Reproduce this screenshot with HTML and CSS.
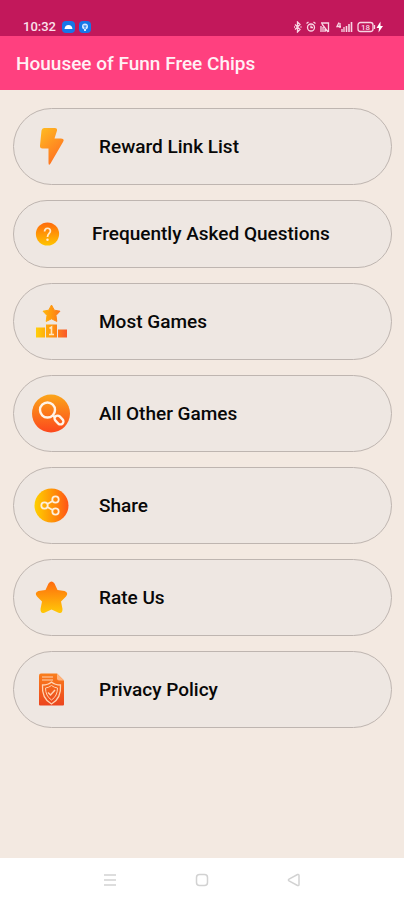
FILE: index.html
```html
<!DOCTYPE html>
<html lang="en">
<head>
<meta charset="UTF-8">
<meta name="viewport" content="width=device-width, initial-scale=1.0">
<title>Houusee of Funn Free Chips</title>
<link rel="stylesheet" href="styles.css">
</head>
<body>

<div class="status-bar">
    <span class="clock">10:32</span>
    <svg class="badges" width="30" height="12" viewBox="0 0 30 12" aria-hidden="true">
        <rect x="0" y="0" width="13" height="12" rx="4" fill="#1677e8"/>
        <path d="M2.500 8 Q3 4 6.500 4 Q10 4 10.500 8 Z" fill="#fff"/>
        <rect x="17" y="0" width="12" height="12" rx="4" fill="#1677e8"/>
        <circle cx="23" cy="5.500" r="3" fill="#d5e8ff"/>
        <path d="M23 5v5M21.500 5h3" stroke="#1677e8" stroke-width="1"/>
        <path d="M22 8h2v2h-2z" fill="#d5e8ff"/>
    </svg>
    <svg class="system-icons" width="90" height="12" viewBox="0 0 90 12" aria-hidden="true" fill="none" stroke="#f8d5e3" stroke-width="1.300">
        <!-- bluetooth -->
        <path d="M1 3.500l5 5-2.500 2.500V1L6 3.500l-5 5M0 6h1M6.500 6h1"/>
        <!-- alarm -->
        <circle cx="17" cy="6.500" r="3.500"/>
        <path d="M17 4.500v2h2M12.500 2.500l2-1.500M21.500 2.500l-2-1.500"/>
        <!-- sim -->
        <path d="M27 2h7.500v9M27 11V5M28 3l6 8M29 6v5M31 8v3"/>
        <!-- signal -->
        <path d="M45 1.500l-2 4h4M46 2v5M48 8v3M50 6v5" />
        <path d="M52.500 5v6M55 3v8M57.500 1v10" stroke-width="1.600"/>
        <!-- battery -->
        <rect x="64" y="1.500" width="15" height="9" rx="2.500"/>
        <path d="M80.500 4v4"/>
        <text class="battery-level" x="71.500" y="9" text-anchor="middle">18</text>
        <path d="M86.500 .5l-4 6.500h2.500l-.5 4.500 4.500-6.500h-2.500z" fill="#fff" stroke="none"/>
    </svg>
</div>

<header class="toolbar">
    <h1>Houusee of Funn Free Chips</h1>
</header>

<main class="menu">
    <button type="button" class="menu-item">
        <svg class="icon" viewBox="0 0 38 38" aria-hidden="true">
            <defs>
                <linearGradient id="bolt" x1="0" y1="0" x2=".6" y2="1">
                    <stop offset="0" stop-color="#ffbd20"/>
                    <stop offset="1" stop-color="#ff7021"/>
                </linearGradient>
            </defs>
            <path d="M12 .5H23Q25.500 .5 25 3L22.500 11H29Q33 11 31 14.500L18.500 36Q16.500 39 16.500 35V21H10.500Q7.500 21 8 18L9.500 3Q10 .5 12 .5Z" fill="url(#bolt)"/>
        </svg>
        <span>Reward Link List</span>
    </button>

    <button type="button" class="menu-item menu-item-small">
        <svg class="icon" viewBox="0 0 31 31" aria-hidden="true">
            <defs>
                <linearGradient id="faq" x1="0" y1="0" x2="0" y2="1">
                    <stop offset="0" stop-color="#ff6a0c"/>
                    <stop offset="1" stop-color="#ffc400"/>
                </linearGradient>
            </defs>
            <circle cx="15.500" cy="15.500" r="12" fill="url(#faq)"/>
            <path d="M12.500 13C12.500 8.500 18.500 8.500 18.500 12.500C18.500 15 15.500 15 15.500 18.500" fill="none" stroke="#ffeacd" stroke-width="1.800"/>
            <circle cx="15.500" cy="21.500" r="1.300" fill="#ffeacd"/>
        </svg>
        <span>Frequently Asked Questions</span>
    </button>

    <button type="button" class="menu-item">
        <svg class="icon" viewBox="0 0 38 38" aria-hidden="true">
            <defs>
                <linearGradient id="podium" gradientUnits="userSpaceOnUse" x1="4" y1="0" x2="35" y2="0">
                    <stop offset="0" stop-color="#ffcf0b"/>
                    <stop offset=".5" stop-color="#ff980f"/>
                    <stop offset="1" stop-color="#f9582a"/>
                </linearGradient>
            </defs>
            <g fill="url(#podium)">
                <path d="M19.500 2.500l2.800 5.200 5.700 1-4 4.200.8 6-5.300-2.600-5.300 2.600.8-6-4-4.200 5.700-1z" stroke="url(#podium)" stroke-linejoin="round"/>
                <rect x="4" y="25" width="9" height="10"/>
                <rect x="14" y="22" width="11" height="13"/>
                <rect x="26" y="27" width="9" height="8"/>
            </g>
            <path d="M17.500 26l2-1.500v7M17 32h5" fill="none" stroke="#ffe5c4" stroke-width="1.600"/>
        </svg>
        <span>Most Games</span>
    </button>

    <button type="button" class="menu-item">
        <svg class="icon" viewBox="0 0 38 38" aria-hidden="true">
            <defs>
                <linearGradient id="search" x1="0" y1="0" x2="0" y2="1">
                    <stop offset="0" stop-color="#fba51a"/>
                    <stop offset="1" stop-color="#fc481c"/>
                </linearGradient>
            </defs>
            <circle cx="19" cy="19" r="19" fill="url(#search)"/>
            <g fill="none" stroke="#fff4e8" stroke-width="2.400">
                <circle cx="15.500" cy="15.500" r="7.500"/>
                <path d="M21 21l2 2"/>
                <rect x="22" y="22.500" width="10" height="6" rx="3" transform="rotate(45 27 25.500)"/>
            </g>
        </svg>
        <span>All Other Games</span>
    </button>

    <button type="button" class="menu-item">
        <svg class="icon" viewBox="0 0 38 38" aria-hidden="true">
            <defs>
                <linearGradient id="share" x1="0" y1="0" x2="1" y2="0">
                    <stop offset="0" stop-color="#ffd000"/>
                    <stop offset=".6" stop-color="#ff8b08"/>
                    <stop offset="1" stop-color="#ff5418"/>
                </linearGradient>
            </defs>
            <circle cx="19.500" cy="19" r="17" fill="url(#share)"/>
            <g fill="none" stroke="#fff0dc" stroke-width="1.800">
                <circle cx="12.500" cy="19" r="3.200"/>
                <circle cx="23.500" cy="13" r="3.200"/>
                <circle cx="23.500" cy="25" r="3.200"/>
                <path d="M15.300 17.500l5.400-3M15.300 20.500l5.400 3"/>
            </g>
        </svg>
        <span>Share</span>
    </button>

    <button type="button" class="menu-item">
        <svg class="icon" viewBox="0 0 38 38" aria-hidden="true">
            <defs>
                <linearGradient id="star" x1="0" y1="0" x2="0" y2="1">
                    <stop offset="0" stop-color="#ff6b0e"/>
                    <stop offset="1" stop-color="#ffc908"/>
                </linearGradient>
            </defs>
            <path d="M16.500 5Q19.500 1 22.500 5L25.500 11.500L32.500 12.500Q37 14 34 18L29 23L30.500 30.500Q30.500 36 26 34L19.500 31L13 34Q8.500 36 8.500 30.500L10 23L5 18Q2 14 6.500 12.500L13.500 11.500Z" fill="url(#star)"/>
        </svg>
        <span>Rate Us</span>
    </button>

    <button type="button" class="menu-item">
        <svg class="icon" viewBox="0 0 38 38" aria-hidden="true">
            <defs>
                <linearGradient id="policy" x1="0" y1="0" x2="0" y2="1">
                    <stop offset="0" stop-color="#fa7e1c"/>
                    <stop offset="1" stop-color="#ec451e"/>
                </linearGradient>
            </defs>
            <path d="M9 3H25L32 10V34Q32 35 31 35H8Q7 35 7 34V5Q7 3 9 3Z" fill="url(#policy)"/>
            <path d="M25 3v5q0 2 2 2h5z" fill="#ffb37c"/>
            <g fill="none" stroke="#ffd3b2">
                <path d="M10 6.500h11M10 9.500h11"/>
                <path d="M19.500 11.500Q23 14.500 28.500 14.500Q29.500 28 19.500 33.500Q9.500 28 10.500 14.500Q16 14.500 19.500 11.500Z" stroke-width="1.300"/>
                <path d="M19.500 15Q22 17 25.500 17.500Q25.500 25.500 19.500 29.500Q13.500 25.500 13.500 17.500Q17 17 19.500 15Z"/>
                <path d="M16 22l2.500 2.500 4.500-5" stroke-width="1.500"/>
            </g>
        </svg>
        <span>Privacy Policy</span>
    </button>
</main>

<nav class="nav-bar" aria-label="System navigation">
    <button type="button" class="nav-button" aria-label="Recent apps">
        <svg width="14" height="14" viewBox="0 0 14 14"><path d="M1 2h12M1 7h12M1 12h12"/></svg>
    </button>
    <button type="button" class="nav-button" aria-label="Home">
        <svg width="14" height="14" viewBox="0 0 14 14"><rect x="1.500" y="1.500" width="11" height="11" rx="3"/></svg>
    </button>
    <button type="button" class="nav-button" aria-label="Back">
        <svg width="14" height="14" viewBox="0 0 14 14"><path d="M2 6.200L10.500 1.500Q12 1 12 2.500V11.500Q12 13 10.500 12.500L2 7.800Q.8 7 2 6.200Z"/></svg>
    </button>
</nav>

</body>
</html>
```
FILE: styles.css
```css
* {
  box-sizing: border-box;
}
body {
  margin: 0;
  min-height: 100vh;
  display: flex;
  flex-direction: column;
  background-color: #f3e9e1;
  font-family: Roboto, sans-serif;
}
button {
  margin: 0;
  font-family: inherit;
  cursor: pointer;
}
.status-bar {
  display: flex;
  align-items: center;
  height: 36px;
  padding: 18px 20px 0 23px;
  background-color: #c2185b;
  color: #fbe1eb;
}
.clock {
  font-size: 13px;
  font-weight: 500;
  line-height: 18px;
}
.badges {
  margin-left: 6px;
}
.system-icons {
  margin-left: auto;
}
.battery-level {
  font-size: 8px;
  font-weight: 500;
  fill: #f8d5e3;
  stroke: none;
}
.toolbar {
  display: flex;
  align-items: center;
  height: 54px;
  padding: 2px 16px 0;
  background-color: #ff407f;
}
.toolbar h1 {
  margin: 0;
  color: #fff0f5;
  font-size: 19px;
  font-weight: 500;
  line-height: 24px;
}
.menu {
  flex: 1;
  display: flex;
  flex-direction: column;
  gap: 15px;
  padding: 18px 12px 24px 13px;
}
.menu-item {
  display: flex;
  align-items: center;
  gap: 29px;
  width: 100%;
  padding: 18px;
  border: 1px solid #beb5b0;
  border-radius: 40px;
  background-color: #eee7e2;
  color: #080808;
  font-size: 19px;
  font-weight: 500;
  line-height: 24px;
  text-align: left;
}
.menu-item:hover {
  background-color: #e8e0da;
}
.icon {
  flex: none;
  width: 38px;
  height: 39px;
}
.menu-item-small .icon {
  width: 31px;
  height: 30px;
}
.nav-bar {
  display: flex;
  align-items: center;
  justify-content: center;
  gap: 78px;
  height: 42px;
  padding-top: 2px;
  background-color: #fff;
}
.nav-button {
  display: flex;
  padding: 0;
  border: none;
  background: none;
}
.nav-button svg {
  fill: none;
  stroke: #d2d2d2;
  stroke-width: 1.5;
}
```
